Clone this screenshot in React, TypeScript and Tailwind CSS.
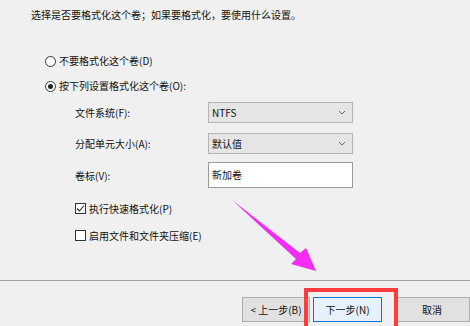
import React from 'react'

const font = { fontFamily: '"Noto Sans CJK SC", "Liberation Sans", sans-serif' }

function Radio({ checked, label }: { checked?: boolean; label: string }) {
  return (
    <div className="flex items-center h-[12px] ml-[45px]">
      <span className="w-[11px] h-[11px] rounded-full border border-[#333] bg-white flex items-center justify-center">
        {checked && <span className="w-[5px] h-[5px] rounded-full bg-[#222]" />}
      </span>
      <span className="ml-[3px] text-[10px] leading-[12px] text-[#111]">{label}</span>
    </div>
  )
}

function Check({ checked, label }: { checked?: boolean; label: string }) {
  return (
    <div className="flex items-center h-[11px] ml-[75px]">
      <span className="w-[11px] h-[11px] border border-[#333] bg-white flex items-center justify-center">
        {checked && (
          <svg width="9" height="9" viewBox="0 0 9 9">
            <path d="M1 4.5 L3.5 7 L8 1.5" fill="none" stroke="#222" strokeWidth="1.1" />
          </svg>
        )}
      </span>
      <span className="ml-[3px] text-[10px] leading-[12px] text-[#111]">{label}</span>
    </div>
  )
}

function Select({ value }: { value: string }) {
  return (
    <div className="h-[21px] w-[145px] bg-[#e5e5e5] border border-[#b4b4b4] flex items-center justify-between px-[3px]">
      <span className="text-[10px] leading-[12px] text-[#111]">{value}</span>
      <svg width="8" height="5" viewBox="0 0 8 5" className="mr-[3px]">
        <path d="M1 1 L4 4 L7 1" fill="none" stroke="#666" strokeWidth="1" />
      </svg>
    </div>
  )
}

export default function App() {
  return (
    <div className="relative w-[470px] h-[326px] bg-[#f0f0f0] overflow-hidden flex flex-col" style={font}>
      <p className="mt-[9px] ml-[31px] h-[12px] text-[10px] leading-[12px] text-[#111]">
        选择是否要格式化这个卷；如果要格式化，要使用什么设置。
      </p>

      <div className="mt-[34px]">
        <Radio label="不要格式化这个卷(D)" />
      </div>
      <div className="mt-[13px]">
        <Radio checked label="按下列设置格式化这个卷(O):" />
      </div>

      <div className="mt-[10px] ml-[75px] grid grid-cols-[133px_145px] gap-y-[10px] text-[10px] leading-[12px] text-[#111]">
        <span className="self-center">文件系统(F):</span>
        <Select value="NTFS" />
        <span className="self-center">分配单元大小(A):</span>
        <Select value="默认值" />
        <span className="self-center">卷标(V):</span>
        <div className="-mt-[2px] h-[26px] bg-white border border-[#9a9a9a] flex items-center px-[3px]">新加卷</div>
      </div>

      <div className="mt-[15px]">
        <Check checked label="执行快速格式化(P)" />
      </div>
      <div className="mt-[16px]">
        <Check label="启用文件和文件夹压缩(E)" />
      </div>

      <div className="mt-[39px] h-px bg-[#a0a0a0]" />

      <div className="mt-[16px] flex pl-[242px] text-[10px] leading-[12px] text-[#111]">
        <button className="w-[73px] h-[25px] bg-[#e1e1e1] border border-[#adadad] flex items-center justify-center">
          &lt; 上一步(B)
        </button>
        <button className="ml-[3px] w-[74px] h-[25px] bg-[#e5f1fb] border border-[#0078d7] flex items-center justify-center">
          下一步(N)
        </button>
        <button className="ml-[12px] w-[76px] h-[25px] shrink-0 bg-[#e1e1e1] border border-[#adadad] flex items-center justify-center">
          取消
        </button>
      </div>

      {/* annotation overlays */}
      <svg className="absolute left-0 top-0 pointer-events-none" width="470" height="326">
        <polygon points="232,200 300,253 306,248 316,271 291,264 296,259" fill="#f22cf2" />
      </svg>
      <div className="absolute left-[304px] top-[288px] w-[94px] h-[50px] border-4 border-[#ff3b3b]" />
    </div>
  )
}
